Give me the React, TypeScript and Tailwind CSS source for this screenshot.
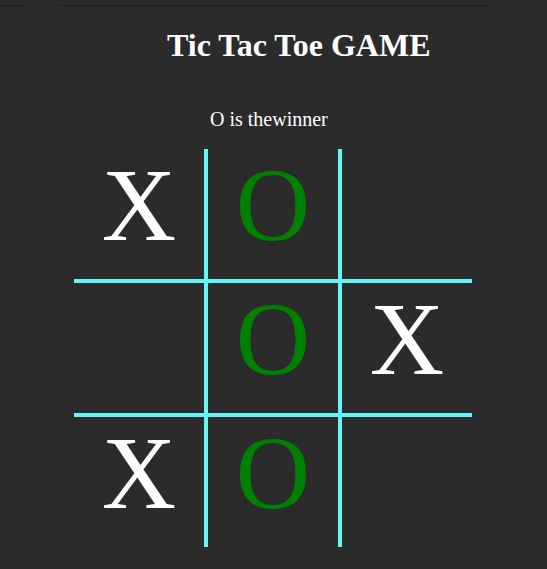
import React from "react";

const board = ["X", "O", "", "", "O", "X", "X", "O", ""];

export default function App() {
  const serif = { fontFamily: '"Liberation Serif", "Times New Roman", serif' };
  return (
    <div className="min-h-[569px] w-full bg-[#2b2b2b] text-white" style={serif}>
      <div className="flex pt-[5px]">
        <div className="h-px w-[24px] bg-[#1f1f1f]" />
        <div className="ml-[35px] h-px w-[431px] bg-[#1f1f1f]" />
      </div>
      <h1 className="m-0 pl-[167px] pt-[21px] text-[32px] font-bold leading-[37px]">Tic Tac Toe GAME</h1>
      <p className="m-0 pl-[210px] pt-[44px] text-[20px] leading-[23px]">O is thewinner</p>
      <div className="ml-[74px] mt-[18px] grid w-[398px] grid-cols-[134px_134px_130px]">
        {board.map((v, i) => {
          const col = i % 3;
          const row = Math.floor(i / 3);
          const br = col < 2 ? "border-r-4" : "";
          const bb = row < 2 ? "border-b-4" : "";
          return (
            <div
              key={i}
              className={`${br} ${bb} flex ${row < 2 ? "h-[134px]" : "h-[130px]"} items-start justify-center border-[#62f6f6]`}
            >
              <span
                className={`text-[103px] leading-[1.09] ${v === "O" ? "text-[#008000]" : "text-white"}`}
              >
                {v}
              </span>
            </div>
          );
        })}
      </div>
    </div>
  );
}
